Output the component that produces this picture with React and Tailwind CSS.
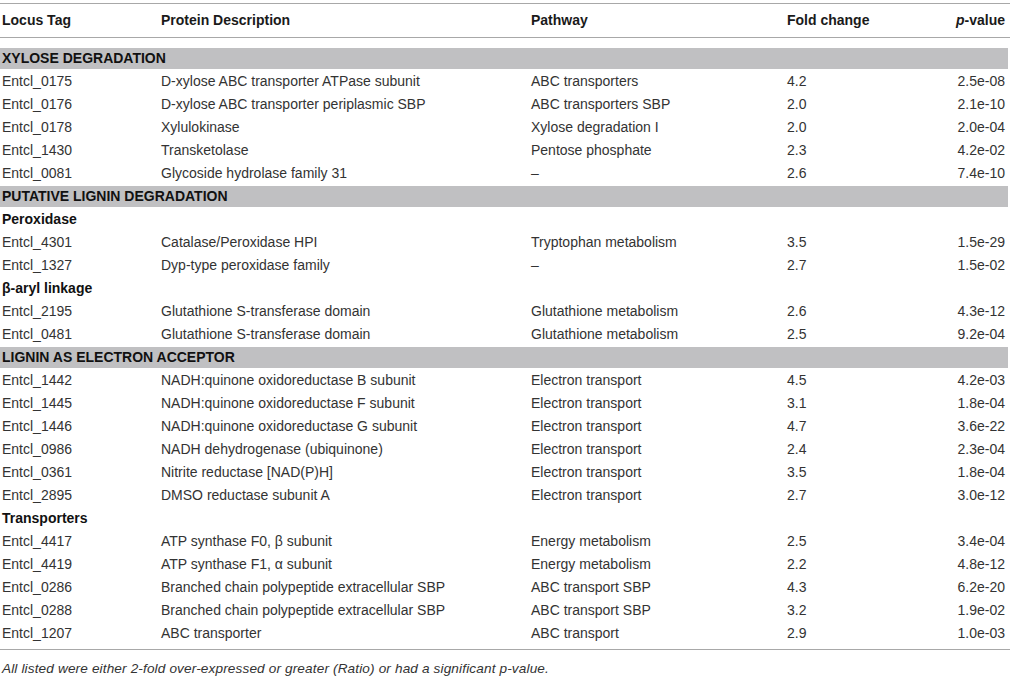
import React from "react";

const rows = [
  { t: "band", label: "XYLOSE DEGRADATION" },
  ["Entcl_0175", "D-xylose ABC transporter ATPase subunit", "ABC transporters", "4.2", "2.5e-08"],
  ["Entcl_0176", "D-xylose ABC transporter periplasmic SBP", "ABC transporters SBP", "2.0", "2.1e-10"],
  ["Entcl_0178", "Xylulokinase", "Xylose degradation I", "2.0", "2.0e-04"],
  ["Entcl_1430", "Transketolase", "Pentose phosphate", "2.3", "4.2e-02"],
  ["Entcl_0081", "Glycoside hydrolase family 31", "–", "2.6", "7.4e-10"],
  { t: "band", label: "PUTATIVE LIGNIN DEGRADATION" },
  { t: "sub", label: "Peroxidase" },
  ["Entcl_4301", "Catalase/Peroxidase HPI", "Tryptophan metabolism", "3.5", "1.5e-29"],
  ["Entcl_1327", "Dyp-type peroxidase family", "–", "2.7", "1.5e-02"],
  { t: "sub", label: "β-aryl linkage" },
  ["Entcl_2195", "Glutathione S-transferase domain", "Glutathione metabolism", "2.6", "4.3e-12"],
  ["Entcl_0481", "Glutathione S-transferase domain", "Glutathione metabolism", "2.5", "9.2e-04"],
  { t: "band", label: "LIGNIN AS ELECTRON ACCEPTOR" },
  ["Entcl_1442", "NADH:quinone oxidoreductase B subunit", "Electron transport", "4.5", "4.2e-03"],
  ["Entcl_1445", "NADH:quinone oxidoreductase F subunit", "Electron transport", "3.1", "1.8e-04"],
  ["Entcl_1446", "NADH:quinone oxidoreductase G subunit", "Electron transport", "4.7", "3.6e-22"],
  ["Entcl_0986", "NADH dehydrogenase (ubiquinone)", "Electron transport", "2.4", "2.3e-04"],
  ["Entcl_0361", "Nitrite reductase [NAD(P)H]", "Electron transport", "3.5", "1.8e-04"],
  ["Entcl_2895", "DMSO reductase subunit A", "Electron transport", "2.7", "3.0e-12"],
  { t: "sub", label: "Transporters" },
  ["Entcl_4417", "ATP synthase F0, β subunit", "Energy metabolism", "2.5", "3.4e-04"],
  ["Entcl_4419", "ATP synthase F1, α subunit", "Energy metabolism", "2.2", "4.8e-12"],
  ["Entcl_0286", "Branched chain polypeptide extracellular SBP", "ABC transport SBP", "4.3", "6.2e-20"],
  ["Entcl_0288", "Branched chain polypeptide extracellular SBP", "ABC transport SBP", "3.2", "1.9e-02"],
  ["Entcl_1207", "ABC transporter", "ABC transport", "2.9", "1.0e-03"],
];

export default function App() {
  return (
    <div
      className="w-[1013px] h-[678px] bg-white text-[14px] text-[#333] overflow-hidden"
      style={{ fontFamily: '"Liberation Sans", Arial, sans-serif' }}
    >
      <div className="w-[1010px] pt-[3px]">
        <div className="h-px bg-[#a8a8a8]" />
        <div className="flex items-center h-[33px] px-[2px] font-bold text-[#1a1a1a]">
          <div className="w-[159px]">Locus Tag</div>
          <div className="w-[370px]">Protein Description</div>
          <div className="w-[256px]">Pathway</div>
          <div className="flex-1">Fold change</div>
          <div className="pr-[3px]">
            <i>p</i>-value
          </div>
        </div>
        <div className="h-px bg-[#a8a8a8]" />
        <div className="h-[9px]" />
        {rows.map((r, i) => {
          if (r.t === "band") {
            return (
              <div key={i} className="h-[23px] flex items-center">
                <div className="h-[21px] w-[1008px] bg-[#c0c0c2] flex items-center px-[2px] font-bold text-[#111]">
                  {r.label}
                </div>
              </div>
            );
          }
          if (r.t === "sub") {
            return (
              <div key={i} className="h-[23px] flex items-center px-[2px] font-bold text-[#111]">
                {r.label}
              </div>
            );
          }
          return (
            <div key={i} className="h-[23px] flex items-center px-[2px]">
              <div className="w-[159px]">{r[0]}</div>
              <div className="w-[370px]">{r[1]}</div>
              <div className="w-[256px]">{r[2]}</div>
              <div className="flex-1">{r[3]}</div>
              <div className="pr-[3px]">{r[4]}</div>
            </div>
          );
        })}
        <div className="h-[4px]" />
        <div className="h-px bg-[#a8a8a8]" />
        <div className="h-[38px] flex items-center px-[2px] italic text-[13.6px] tracking-[0.14px] text-[#333]">
          All listed were either 2-fold over-expressed or greater (Ratio) or had a significant p-value.
        </div>
      </div>
    </div>
  );
}
